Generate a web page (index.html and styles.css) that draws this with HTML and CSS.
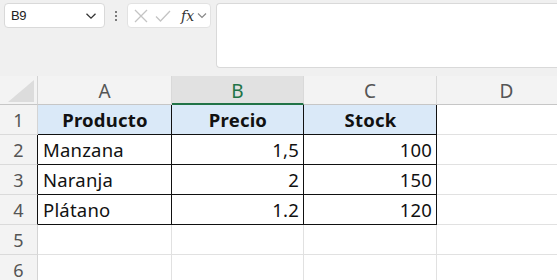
FILE: index.html
```html
<!DOCTYPE html>
<html lang="es">
<head>
<meta charset="utf-8">
<link rel="stylesheet" href="styles.css">
</head>
<body>
<div class="topbar">
  <div class="namebox">
    <span class="ref">B9</span>
    <svg class="chev" width="12" height="8" viewBox="0 0 12 8"><path d="M1.5 1.8 L6 6.2 L10.5 1.8" fill="none" stroke="#333" stroke-width="1.3"/></svg>
  </div>
  <div class="dots"><i></i><i></i><i></i></div>
  <div class="fbtns">
    <svg class="ico" width="14" height="14" viewBox="0 0 14 14"><path d="M1 1 L13 13 M13 1 L1 13" stroke="#c4c4c4" stroke-width="1.3" fill="none"/></svg>
    <svg class="ico" width="16" height="14" viewBox="0 0 16 14"><path d="M1 7.5 L5.5 12 L15 2" stroke="#c4c4c4" stroke-width="1.3" fill="none"/></svg>
    <span class="fx">fx</span>
    <svg class="chev2" width="10" height="7" viewBox="0 0 10 7"><path d="M1 1.5 L5 5.5 L9 1.5" fill="none" stroke="#888" stroke-width="1.2"/></svg>
  </div>
  <div class="finput"></div>
</div>
<div class="sheet">
  <div class="corner"><span class="tri"></span></div>
  <div class="ch">A</div>
  <div class="ch sel">B</div>
  <div class="ch">C</div>
  <div class="ch">D</div>

  <div class="rh">1</div>
  <div class="c hd">Producto</div>
  <div class="c hd">Precio</div>
  <div class="c hd">Stock</div>
  <div class="c e"></div>

  <div class="rh blk">2</div>
  <div class="c t">Manzana</div>
  <div class="c t n">1,5</div>
  <div class="c t n">100</div>
  <div class="c e"></div>

  <div class="rh blk">3</div>
  <div class="c t">Naranja</div>
  <div class="c t n">2</div>
  <div class="c t n">150</div>
  <div class="c e"></div>

  <div class="rh blk">4</div>
  <div class="c t">Plátano</div>
  <div class="c t n">1.2</div>
  <div class="c t n">120</div>
  <div class="c e"></div>

  <div class="rh">5</div>
  <div class="c e"></div>
  <div class="c e"></div>
  <div class="c e"></div>
  <div class="c e"></div>

  <div class="rh">6</div>
  <div class="c e"></div>
  <div class="c e"></div>
  <div class="c e"></div>
  <div class="c e"></div>
</div>
</body>
</html>
```

FILE: styles.css
```css
* { box-sizing: border-box; }
html, body { margin: 0; padding: 0; }
body {
  width: 557px;
  height: 280px;
  overflow: hidden;
  background: #f0f0f0;
  font-family: "Noto Sans", "Open Sans", sans-serif;
}
.topbar {
  height: 76px;
  display: flex;
  align-items: flex-start;
  padding: 3px 0 0 4px;
}
.namebox {
  width: 101px;
  height: 25px;
  background: #fff;
  border: 1px solid #d9d9d9;
  border-radius: 4px;
  display: flex;
  align-items: center;
  justify-content: space-between;
  padding: 0 7px 0 6px;
}
.ref {
  font-family: "Liberation Sans", Arial, sans-serif;
  font-size: 13px;
  color: #222;
  letter-spacing: -0.3px;
}
.dots {
  width: 22px;
  height: 25px;
  display: flex;
  flex-direction: column;
  align-items: center;
  justify-content: center;
  gap: 2px;
}
.dots i {
  width: 2px;
  height: 2px;
  background: #555;
  border-radius: 1px;
  display: block;
}
.fbtns {
  width: 84px;
  height: 25px;
  background: #fff;
  border: 1px solid #e2e2e2;
  border-radius: 4px;
  display: flex;
  align-items: center;
  padding: 0 0 0 6px;
}
.fbtns .ico { margin-right: 7px; }
.fbtns .ico + .ico { margin-right: 10px; }
.fx {
  font-family: "DejaVu Serif", "Liberation Serif", serif;
  font-style: italic;
  font-size: 14px;
  color: #333;
  margin-right: 3px;
}
.finput {
  flex: 1;
  margin-left: 5px;
  height: 65px;
  background: #fff;
  border: 1px solid #d9d9d9;
  border-right: none;
  border-radius: 4px 0 0 4px;
}
.sheet {
  display: grid;
  grid-template-columns: 38px 134px 132px 133px 140px;
  grid-template-rows: 29px repeat(6, 30px);
  background: #fff;
}
.corner {
  background: #f3f3f3;
  border-right: 1px solid #d4d4d4;
  border-bottom: 1px solid #c6c6c6;
  position: relative;
}
.tri {
  position: absolute;
  right: 3px;
  bottom: 2px;
  width: 0;
  height: 0;
  border-left: 26px solid transparent;
  border-bottom: 22px solid #dcdcdc;
}
.ch {
  background: #f3f3f3;
  border-right: 1px solid #d9d9d9;
  border-bottom: 1px solid #c6c6c6;
  display: flex;
  align-items: center;
  justify-content: center;
  font-size: 19px;
  color: #555;
  padding-top: 2px;
}
.ch.sel {
  background: #e1e1e1;
  color: #217346;
  border-bottom: 2px solid #217346;
}
.rh {
  background: #f3f3f3;
  border-right: 1px solid #d4d4d4;
  border-bottom: 1px solid #dadada;
  display: flex;
  align-items: center;
  justify-content: center;
  font-size: 18px;
  color: #555;
}
.rh.blk { border-right-color: #111; }
.c {
  display: flex;
  align-items: center;
  padding: 0 4px 0 5px;
  font-size: 18.5px;
  letter-spacing: 0.2px;
  color: #111;
  border-right: 1px solid #e1e1e1;
  border-bottom: 1px solid #e1e1e1;
}
.c.hd {
  background: #dae9f8;
  font-weight: 700;
  justify-content: center;
  border-right: 1px solid #111;
  border-bottom: 1px solid #111;
}
.c.t {
  border-right: 1px solid #111;
  border-bottom: 1px solid #111;
}
.c.n { justify-content: flex-end; }
```
